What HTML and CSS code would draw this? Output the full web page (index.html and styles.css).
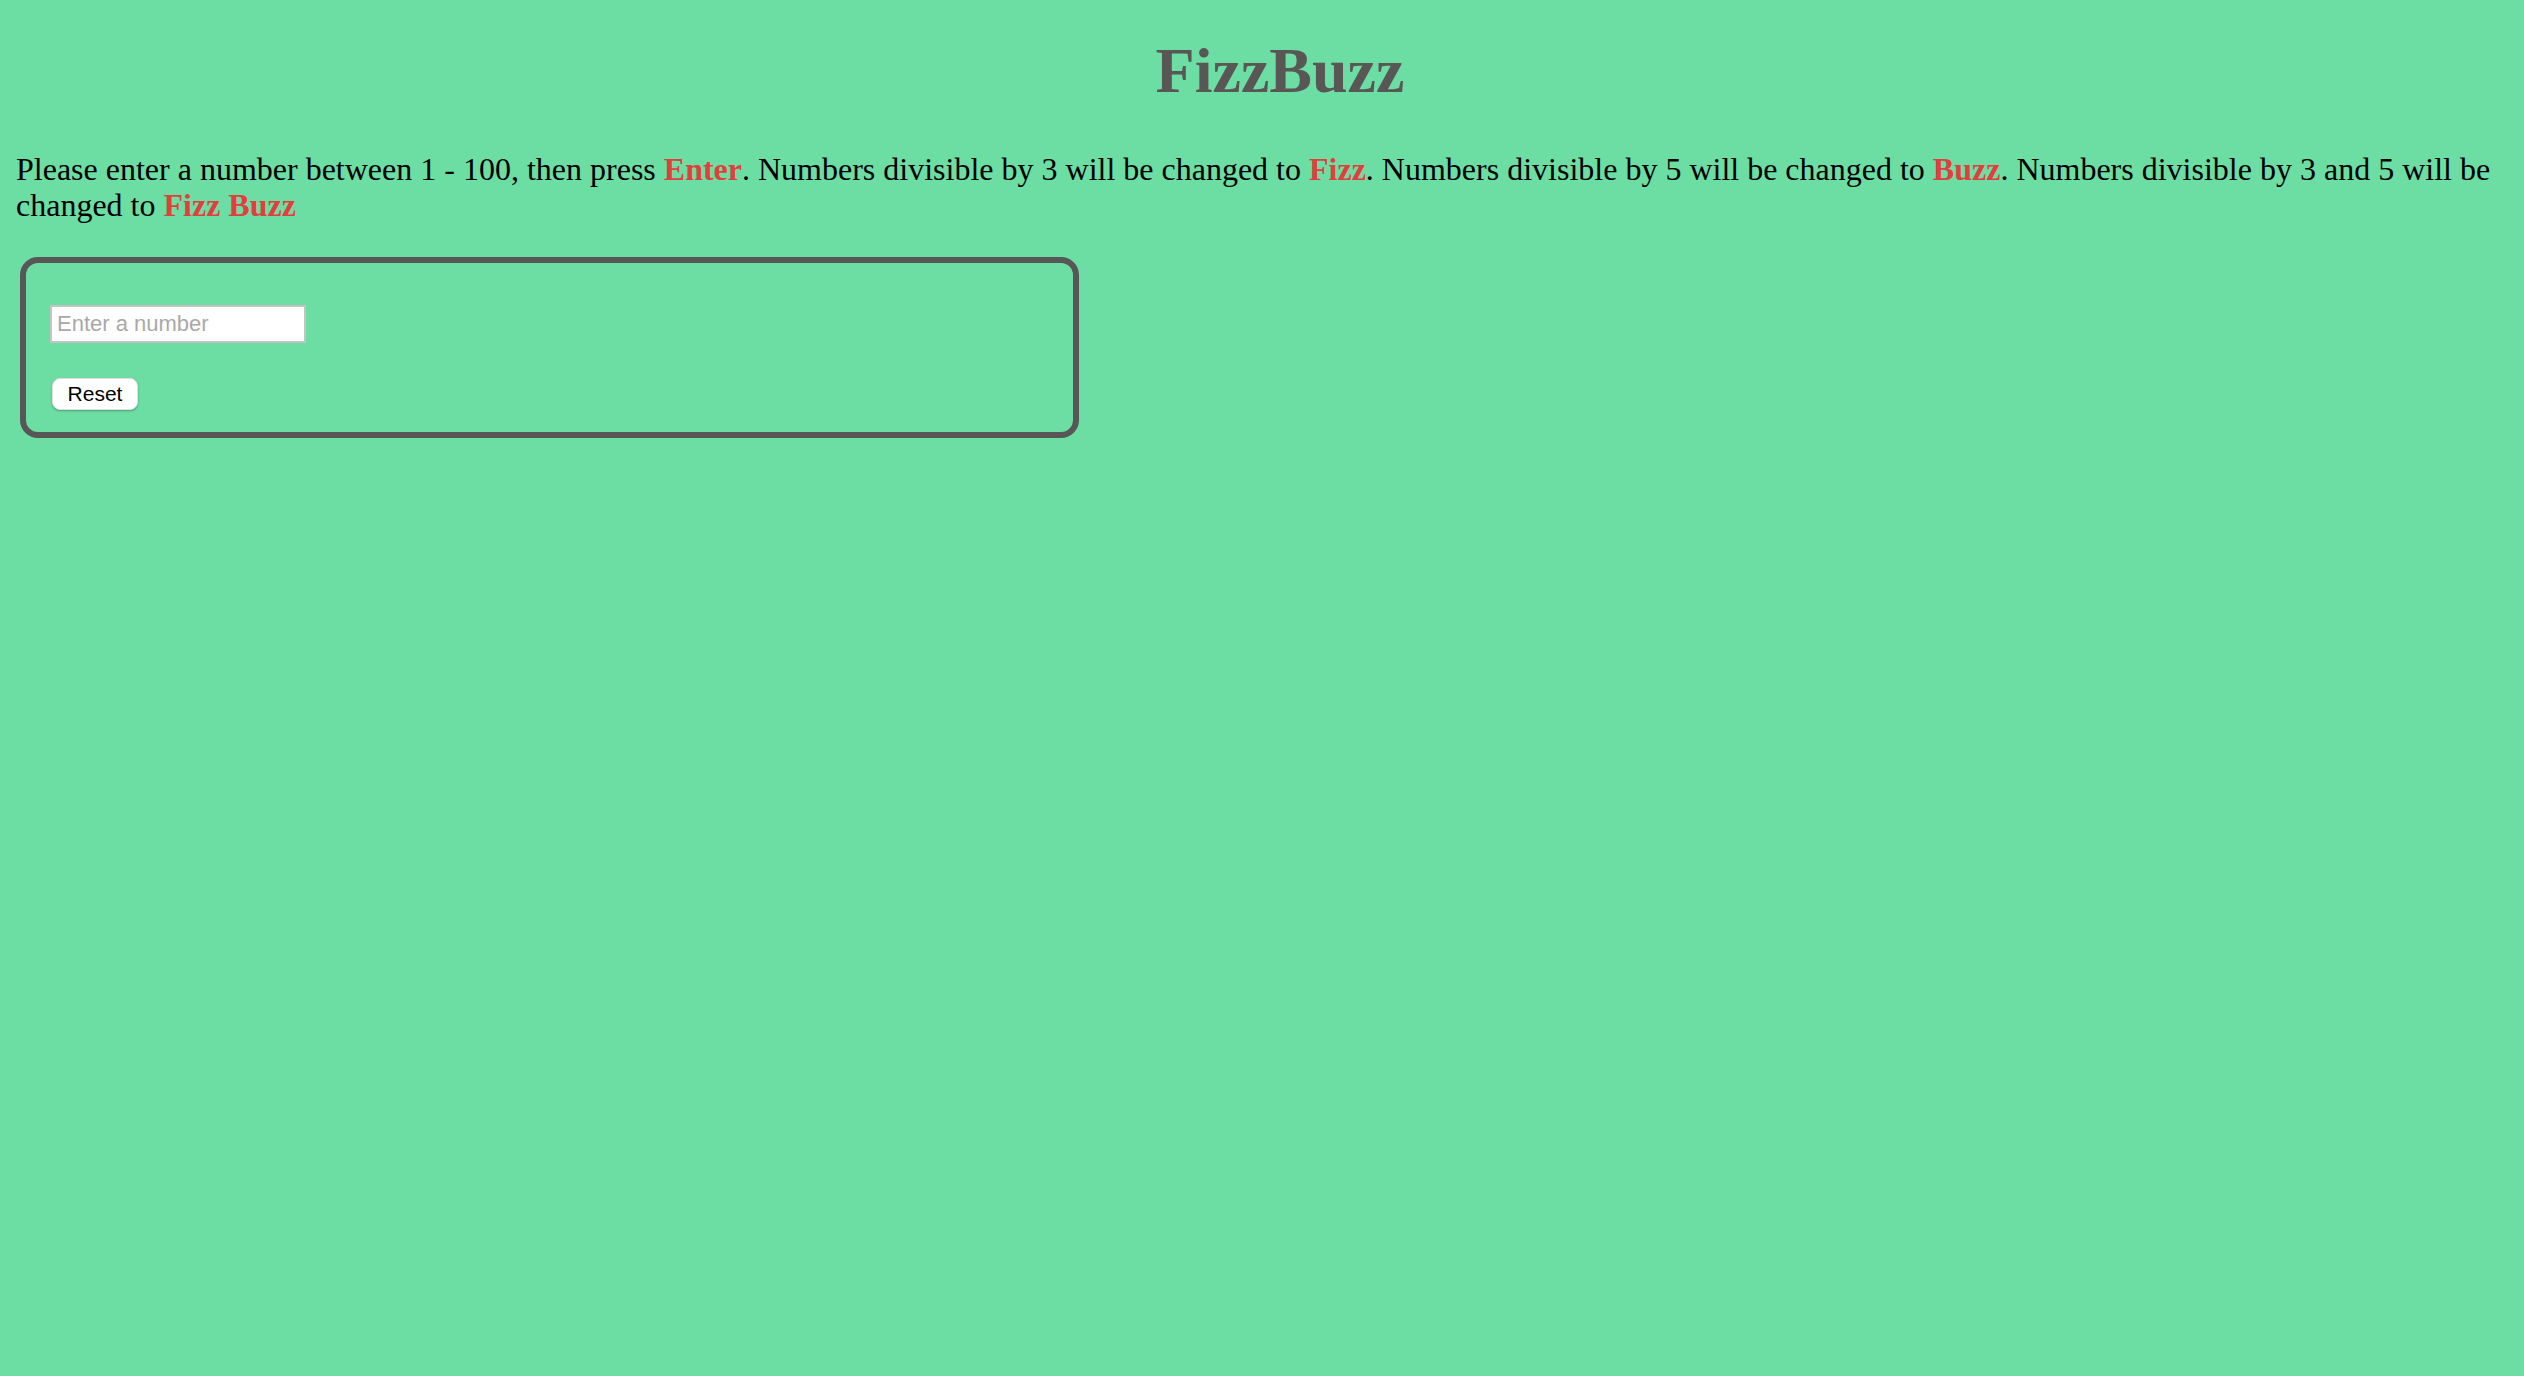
FILE: index.html
```html
<!DOCTYPE html>
<html lang="en">
<head>
<meta charset="utf-8">
<title>FizzBuzz</title>
<link rel="stylesheet" href="styles.css">
</head>
<body>
  <h1 class="title">FizzBuzz</h1>
  <p class="intro">Please enter a number between 1 - 100, then press <strong class="hl">Enter</strong>. Numbers divisible by 3 will be changed to <strong class="hl">Fizz</strong>. Numbers divisible by 5 will be changed to <strong class="hl">Buzz</strong>. Numbers divisible by 3 and 5 will be changed to <strong class="hl">Fizz Buzz</strong></p>
  <div class="panel">
    <input class="num-input" type="text" placeholder="Enter a number">
    <button class="reset-btn" type="button">Reset</button>
  </div>
</body>
</html>
```
FILE: styles.css
```css
html, body {
  background: #6cdea3;
}
body {
  margin: 0;
  padding: 0 16px;
  font-family: "Liberation Serif", "Times New Roman", serif;
  color: #000;
}
.title {
  margin: 34px 0 0;
  padding-left: 36px;
  text-align: center;
  font-size: 64px;
  font-weight: bold;
  line-height: normal;
  color: #595755;
}
.intro {
  margin: 43px 0 0;
  font-size: 32px;
  line-height: 36px;
}
.hl {
  color: #e23e3e;
  font-weight: bold;
}
.panel {
  box-sizing: border-box;
  width: 1059px;
  margin: 34px 0 0 4px;
  border: 6px solid #575757;
  border-radius: 18px;
  padding: 42px 24px 22px;
  display: flex;
  flex-direction: column;
  align-items: flex-start;
  gap: 35px;
}
.num-input {
  box-sizing: border-box;
  width: 256px;
  height: 38px;
  margin: 0;
  border: 2px solid #c4c4c4;
  padding: 0 5px;
  background: #fff;
  font-family: "Liberation Sans", Arial, sans-serif;
  font-size: 22px;
  color: #000;
  outline: none;
}
.num-input::placeholder {
  color: #a9a9a9;
}
.reset-btn {
  box-sizing: border-box;
  width: 86px;
  height: 32px;
  margin: 0 0 0 2px;
  padding: 0;
  border: 1px solid #e0e0e0;
  border-radius: 8px;
  background: #fff;
  box-shadow: 0 1px 2px rgba(0, 0, 0, 0.3);
  font-family: "Liberation Sans", Arial, sans-serif;
  font-size: 21px;
  color: #000;
}
```
